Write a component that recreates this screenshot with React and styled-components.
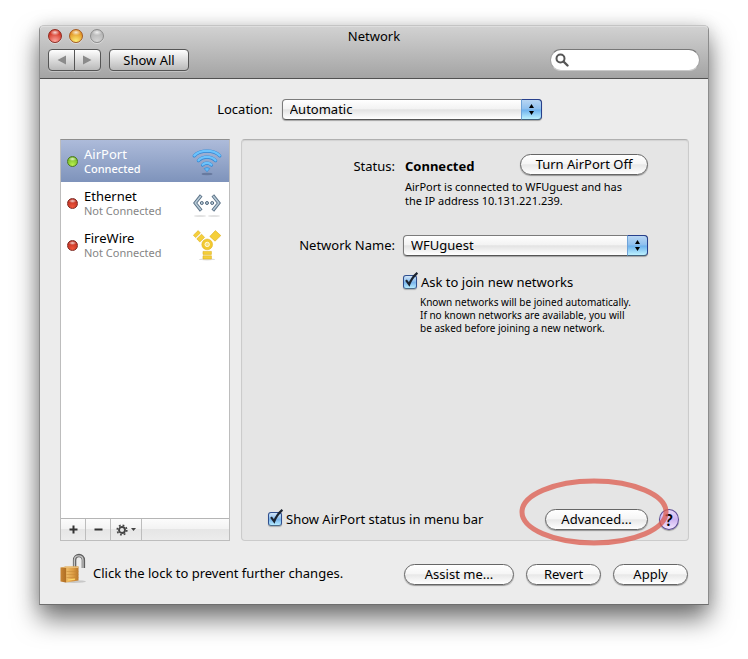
import React, { useState } from 'react';
import styled, { createGlobalStyle } from 'styled-components';

const GlobalStyle = createGlobalStyle`
  *,
  *::after {
    box-sizing: border-box;
  }

  body {
    margin: 0;
    background: #fff;
    color: #000;
    font-family: 'Lucida Grande', 'Noto Sans', 'Open Sans', sans-serif;
    font-size: 13px;
    line-height: 16px;
  }

  button,
  input,
  select {
    font: inherit;
    color: inherit;
    margin: 0;
  }
`;

const Page = styled.div`
  padding: 25px 39px 54px;
`;

const Window = styled.main`
  display: flex;
  flex-direction: column;
  background: #ececec;
  border: 1px solid #8c8c8c;
  border-top-color: #c4c4c4;
  border-bottom-color: #6e6e6e;
  border-radius: 5px 5px 0 0;
  box-shadow: 0 14px 26px rgba(0, 0, 0, 0.55), 0 0 16px rgba(0, 0, 0, 0.12);
`;

const Header = styled.header`
  background: linear-gradient(#d2d2d2, #a4a4a4);
  border-bottom: 1px solid #515151;
  border-radius: 4px 4px 0 0;
  box-shadow: inset 0 1px 0 #dedede;
  padding: 0 8px 7px;
`;

const TitleBar = styled.div`
  display: grid;
  grid-template-columns: 1fr auto 1fr;
  align-items: center;
  height: 20px;
  margin-bottom: 3px;
`;

const Title = styled.h1`
  margin: 0;
  font-size: 13px;
  font-weight: normal;
`;

const Lights = styled.div`
  display: flex;
  gap: 7px;
`;

const Light = styled.button`
  width: 14px;
  height: 14px;
  padding: 0;
  border: 1px solid ${({ $edge }) => $edge};
  border-radius: 50%;
  background: radial-gradient(ellipse 5px 3px at 50% 20%, rgba(255, 255, 255, 0.8), transparent),
    radial-gradient(circle at 50% 95%, ${({ $glow }) => $glow}, ${({ $fill }) => $fill} 75%);
  box-shadow: 0 1px 0 rgba(255, 255, 255, 0.4);
`;

const Toolbar = styled.div`
  display: flex;
  align-items: center;
  gap: 8px;
`;

const Segments = styled.div`
  display: flex;
`;

const ToolButton = styled.button`
  display: flex;
  align-items: center;
  justify-content: center;
  min-width: 80px;
  height: 22px;
  padding: 0 12px;
  border: 1px solid #555;
  border-radius: 4px;
  background: linear-gradient(#fefefe, #b9b9b9);
  box-shadow: 0 1px 0 rgba(255, 255, 255, 0.3);
`;

const SegmentButton = styled(ToolButton)`
  min-width: 27px;
  padding: 0;

  &:first-child {
    border-radius: 4px 0 0 4px;
  }

  &:last-child {
    margin-left: -1px;
    border-radius: 0 4px 4px 0;
  }
`;

const Search = styled.label`
  display: flex;
  align-items: center;
  gap: 4px;
  width: 150px;
  height: 22px;
  margin-left: auto;
  padding: 0 8px 0 4px;
  border: 1px solid #a2a2a2;
  border-top-color: #777;
  border-bottom-color: #c9c9c9;
  border-radius: 11px;
  background: #fff;

  input {
    flex: 1;
    min-width: 0;
    border: 0;
    padding: 0;
    outline: none;
    background: none;
  }
`;

const Content = styled.div`
  display: flex;
  flex-direction: column;
  padding: 20px 19px 19px 20px;
`;

const LocationRow = styled.div`
  display: flex;
  align-items: center;
  justify-content: center;
  gap: 9px;
  padding-left: 10px;
  margin-bottom: 19px;

  label {
    padding-bottom: 2px;
  }
`;

const PopUp = styled.span`
  position: relative;
  display: block;
  width: ${({ $width }) => $width || '100%'};

  &::after {
    content: '';
    position: absolute;
    top: 0;
    right: 0;
    width: 21px;
    height: 21px;
    border: 1px solid #28408c;
    border-left-color: #6fa3d8;
    border-bottom-color: #42617c;
    border-radius: 0 4px 4px 0;
    background: linear-gradient(#b8d6f3, #8dbfee 48%, #6cb0ec 52%, #bdf2ff);
    pointer-events: none;
  }

  select {
    display: block;
    appearance: none;
    width: 100%;
    height: 21px;
    padding: 0 28px 1px 7px;
    border: 1px solid #7b7b7b;
    border-bottom-color: #555;
    border-radius: 4px;
    background: linear-gradient(#fff, #f3f3f3 45%, #e3e3e3 52%, #fff);
    box-shadow: 0 1px 1px rgba(0, 0, 0, 0.3);
  }

  svg {
    position: absolute;
    z-index: 1;
    top: 4px;
    right: 7px;
    pointer-events: none;
  }
`;

const Columns = styled.div`
  display: flex;
  gap: 11px;
  min-height: 402px;
`;

const Sidebar = styled.nav`
  display: flex;
  flex-direction: column;
  flex: 0 0 170px;
  border: 1px solid #bdbdbd;
  border-top-color: #8e8e8e;
  background: #fff;
`;

const Service = styled.button`
  display: flex;
  align-items: center;
  gap: 6px;
  height: 42px;
  padding: 0 6px;
  border: 0;
  text-align: left;
  background: ${({ $selected }) => ($selected ? 'linear-gradient(#adbbda, #7e93bb)' : 'none')};
  color: ${({ $selected }) => ($selected ? '#fff' : '#000')};
`;

const Dot = styled.span`
  width: 11px;
  height: 11px;
  border-radius: 50%;
  border: 1px solid ${({ $on }) => ($on ? '#4c7a1c' : '#7f2a22')};
  background: radial-gradient(ellipse 4px 2px at 50% 22%, rgba(255, 255, 255, 0.8), transparent),
    radial-gradient(circle at 50% 85%, ${({ $on }) => ($on ? '#b8f04c, #62a81e' : '#f0563c, #b02318')});
`;

const ServiceText = styled.span`
  flex: 1;
  display: flex;
  flex-direction: column;
  line-height: 15px;

  small {
    font-size: 11px;
    line-height: 14px;
    font-weight: ${({ $selected }) => ($selected ? 500 : 400)};
    color: ${({ $selected }) => ($selected ? '#fff' : '#858585')};
  }
`;

const SidebarBar = styled.div`
  display: flex;
  height: 22px;
  margin-top: auto;
  border-top: 1px solid #b5b5b5;
  background: linear-gradient(#fcfcfc, #f3f3f3 46%, #e6e6e6 50%, #ececec);
`;

const BarButton = styled.button`
  display: flex;
  align-items: center;
  justify-content: center;
  gap: 3px;
  width: ${({ $wide }) => ($wide ? 31 : 25)}px;
  padding: 0;
  border: 0;
  border-right: 1px solid #bdbdbd;
  background: none;
`;

const Panel = styled.section`
  flex: 1;
  display: flex;
  flex-direction: column;
  padding: 14px 9px 10px 26px;
  border: 1px solid #cbcbcb;
  border-top-color: #b0b0b0;
  border-radius: 4px;
  background: #e5e5e5;
  box-shadow: inset 0 1px 1px rgba(0, 0, 0, 0.08);
`;

const Fields = styled.div`
  display: grid;
  grid-template-columns: 1fr 245px;
  column-gap: 8px;
  padding-right: 31px;
`;

const FieldLabel = styled.label`
  text-align: right;
  line-height: ${({ $tall }) => ($tall ? 24 : 20)}px;
`;

const Field = styled.div`
  display: flex;
  flex-direction: column;
`;

const JoinField = styled(Field)`
  grid-column: 2;
  padding-top: 18px;
`;

const StatusLine = styled.div`
  display: flex;
  align-items: center;
  justify-content: space-between;
  padding-left: 2px;

  strong {
    padding-top: 2px;
    font-weight: 700;
  }
`;

const StatusNote = styled.p`
  margin: 5px 0 27px 2px;
  font-size: 11px;
  line-height: 14px;
`;

const JoinNote = styled.p`
  margin: 4px 0 0 17px;
  font-size: 10px;
  line-height: 13px;
`;

const PillButton = styled.button`
  min-width: ${({ $width }) => $width || 75}px;
  height: 21px;
  padding: 0 12px 1px;
  border: 1px solid #666;
  border-radius: 11px;
  background: linear-gradient(#fff, #f6f6f6 45%, #e8e8e8 52%, #fff);
  box-shadow: 0 1px 1px rgba(0, 0, 0, 0.35);
  line-height: 18px;
  white-space: nowrap;
`;

const CheckLabel = styled.label`
  display: flex;
  align-items: center;
  gap: 4px;
  padding-bottom: 2px;
`;

const CheckBox = styled.span`
  position: relative;
  display: flex;

  input {
    appearance: none;
    width: 14px;
    height: 14px;
    border: 1px solid #2f4f8f;
    border-bottom-color: #4d6c8c;
    border-radius: 3px;
    background: linear-gradient(#d3e6f8, #7cb6ec 55%, #b5ebff);
    box-shadow: 0 1px 1px rgba(0, 0, 0, 0.25);
  }

  svg {
    position: absolute;
    left: 0;
    bottom: 2px;
    pointer-events: none;
  }

  input:not(:checked) + svg {
    display: none;
  }
`;

const PanelFooter = styled.div`
  display: flex;
  align-items: center;
  gap: 11px;
  margin-top: auto;
`;

const Highlighted = styled.div`
  position: relative;
  margin-left: auto;

  svg {
    position: absolute;
    left: -26px;
    top: -31px;
    z-index: 2;
    pointer-events: none;
  }
`;

const HelpButton = styled.button`
  width: 20px;
  height: 21px;
  padding: 0;
  border: 1px solid #5b4a94;
  border-radius: 50%;
  background: linear-gradient(#e6d8f8, #cdb4f0 50%, #f4e6ff);
  box-shadow: 0 1px 1px rgba(0, 0, 0, 0.35);
  font-size: 16px;
  font-weight: 600;
  line-height: 18px;
`;

const Footer = styled.footer`
  display: flex;
  align-items: center;
  gap: 12px;
  margin-top: 11px;
  padding-right: 1px;
`;

const LockLabel = styled.button`
  display: flex;
  align-items: center;
  gap: 6px;
  margin-right: auto;
  padding: 0;
  border: 0;
  background: none;
  height: 32px;

  span {
    padding-top: 9px;
  }
`;

const FooterButtons = styled.div`
  display: flex;
  gap: 12px;
  padding-top: 12px;
`;

const Arrows = () => (
  <svg width="7" height="13" viewBox="0 0 7 13" aria-hidden="true">
    <path d="M3.5 1 6 5H1zM3.5 12 1 8h5z" fill="#000" />
  </svg>
);

const CheckMark = () => (
  <svg width="16" height="15" viewBox="0 0 16 15" aria-hidden="true">
    <path d="M3 8.2 6.2 12.4C8 7.6 10.6 4 14.4 0.8" fill="none" stroke="#1c2430" strokeWidth="2.2" />
  </svg>
);

const Magnifier = () => (
  <svg width="14" height="14" viewBox="0 0 14 14" fill="none" stroke="#565656" aria-hidden="true">
    <circle cx="5.5" cy="5.5" r="4" strokeWidth="2" />
    <path d="m8.5 8.5 4 4" strokeWidth="2.4" strokeLinecap="round" />
  </svg>
);

const AirPortIcon = () => (
  <svg width="32" height="32" viewBox="0 0 32 32" fill="none" aria-hidden="true">
    <ellipse cx="16" cy="29" rx="5.5" ry="1.2" fill="#5b6c90" opacity="0.7" />
    <g stroke="#2f86d4" strokeWidth="3.2" strokeLinecap="round">
      <path d="M3.2 10.8C9.5 4.6 22.5 4.6 28.8 10.8" />
      <path d="M7.4 15.6C12 11 20 11 24.6 15.6" />
      <path d="M11.6 20C14 17.4 18 17.4 20.4 20" />
    </g>
    <g stroke="#6cc2fc" strokeWidth="2.2" strokeLinecap="round">
      <path d="M3.2 10.6C9.5 4.4 22.5 4.4 28.8 10.6" />
      <path d="M7.4 15.4C12 10.8 20 10.8 24.6 15.4" />
      <path d="M11.6 19.8C14 17.2 18 17.2 20.4 19.8" />
    </g>
    <path d="M13.2 23.6Q16 21.4 18.8 23.6L16 26.8z" fill="#62bcfa" stroke="#2f86d4" strokeWidth="0.6" />
  </svg>
);

const EthernetIcon = () => (
  <svg width="32" height="32" viewBox="0 0 32 32" fill="none" aria-hidden="true">
    <ellipse cx="9" cy="29" rx="6" ry="1" fill="#e2e2e2" />
    <ellipse cx="23" cy="29" rx="6" ry="1" fill="#e2e2e2" />
    <g stroke="#5d7388" strokeWidth="3.4">
      <path d="M10.2 8.4 4.2 16l6 7.6" />
      <path d="M21.8 8.4l6 7.6-6 7.6" />
    </g>
    <g stroke="#b9ccd8" strokeWidth="1.5">
      <path d="M9.8 9 4.2 16l5.6 7" />
      <path d="M22.2 9l5.6 7-5.6 7" />
    </g>
    <g fill="#b9ccd8" stroke="#54697e" strokeWidth="1">
      <circle cx="10.8" cy="16" r="1.5" />
      <circle cx="16" cy="16" r="1.5" />
      <circle cx="21.2" cy="16" r="1.5" />
    </g>
  </svg>
);

const FireWireIcon = () => (
  <svg width="32" height="32" viewBox="0 0 32 32" aria-hidden="true">
    <ellipse cx="16" cy="30.4" rx="8" ry="1" fill="#dedede" />
    <g fill="#f5cf3a" stroke="#dcae20" strokeWidth="0.6">
      <path d="M2.4 6.2 7.2 1.6l2.2 2.4-4.8 4.6z" />
      <path d="m5.8 9.8 4.8-4.6 3 3.2L8.8 13z" />
      <path d="M24.4 1.6 29.8 6.6 24 12.2l-5.2-4.8z" />
      <path d="M12 22.4h8.4v3H12zM12 26.8h8.4v3.2H12z" />
    </g>
    <circle cx="16.2" cy="15.4" r="5.4" fill="#f2c930" stroke="#dcae20" strokeWidth="0.5" />
    <circle cx="16.2" cy="15.4" r="2.2" fill="#f8e07a" stroke="#fffbe6" strokeWidth="1" />
  </svg>
);

const GearIcon = () => (
  <svg width="12" height="12" viewBox="0 0 12 12" fill="none" stroke="#444" aria-hidden="true">
    <circle cx="6" cy="6" r="3" strokeWidth="1.9" />
    <circle cx="6" cy="6" r="4.8" strokeWidth="1.6" strokeDasharray="1.8 1.97" />
  </svg>
);

const LockIcon = () => (
  <svg width="27" height="32" viewBox="0 0 27 32" aria-hidden="true">
    <defs>
      <linearGradient id="brass" x1="0" x2="1" y1="0" y2="0">
        <stop offset="0" stopColor="#c98636" />
        <stop offset="0.3" stopColor="#b06f24" />
        <stop offset="0.34" stopColor="#eebb66" />
        <stop offset="0.7" stopColor="#dc9c44" />
        <stop offset="1" stopColor="#b8762a" />
      </linearGradient>
    </defs>
    <ellipse cx="14" cy="28.6" rx="12" ry="1.4" fill="#c8c8c8" />
    <path d="M14.6 15V7.2c0-6.2 8.8-6.2 8.8 0V15" fill="none" stroke="#5e5e5e" strokeWidth="3.4" />
    <path d="M14.4 15V7.2c0-5.8 8.6-5.8 8.6 0V15" fill="none" stroke="#c4c4c4" strokeWidth="1.4" />
    <path d="m0.5 14.4 6-1h12v14.2L6 29.4l-5.5-1z" fill="url(#brass)" />
    <path d="m0.5 14.4 6-1h12l-0.4 1.6H6z" fill="#e9bd76" />
    <path d="M6.5 18.5h12M6.5 21.5h12M6.5 24.5h12" stroke="#c48634" strokeWidth="0.5" />
    <path d="m8 27 7-0.8" stroke="#ffd96a" strokeWidth="1.2" />
  </svg>
);

const services = [
  { name: 'AirPort', status: 'Connected', on: true, Icon: AirPortIcon },
  { name: 'Ethernet', status: 'Not Connected', on: false, Icon: EthernetIcon },
  { name: 'FireWire', status: 'Not Connected', on: false, Icon: FireWireIcon },
];

const Check = ({ children }) => (
  <CheckLabel>
    <CheckBox>
      <input type="checkbox" defaultChecked />
      <CheckMark />
    </CheckBox>
    {children}
  </CheckLabel>
);

const App = () => {
  const [selected, setSelected] = useState('AirPort');

  return (
    <>
      <GlobalStyle />
      <Page>
        <Window>
          <Header>
            <TitleBar>
              <Lights>
                <Light aria-label="Close" $edge="#8e2a20" $fill="#d0301f" $glow="#ffa8a0" />
                <Light aria-label="Minimize" $edge="#a55a20" $fill="#e09020" $glow="#fff27a" />
                <Light aria-label="Zoom" $edge="#8d8d8d" $fill="#b4b4b4" $glow="#d6d6d6" />
              </Lights>
              <Title>Network</Title>
            </TitleBar>
            <Toolbar>
              <Segments>
                <SegmentButton aria-label="Back">
                  <svg width="9" height="10" viewBox="0 0 9 10"><path d="M9 0.5v9L0.5 5z" fill="#8b8b8b" /></svg>
                </SegmentButton>
                <SegmentButton aria-label="Forward">
                  <svg width="9" height="10" viewBox="0 0 9 10"><path d="M0 0.5v9L8.5 5z" fill="#8b8b8b" /></svg>
                </SegmentButton>
              </Segments>
              <ToolButton>Show All</ToolButton>
              <Search>
                <Magnifier />
                <input type="text" aria-label="Search" />
              </Search>
            </Toolbar>
          </Header>

          <Content>
            <LocationRow>
              <label htmlFor="location">Location:</label>
              <PopUp $width="260px">
                <select id="location">
                  <option>Automatic</option>
                </select>
                <Arrows />
              </PopUp>
            </LocationRow>

            <Columns>
              <Sidebar>
                {services.map(({ name, status, on, Icon }) => (
                  <Service key={name} $selected={selected === name} onClick={() => setSelected(name)}>
                    <Dot $on={on} />
                    <ServiceText $selected={selected === name}>
                      {name}
                      <small>{status}</small>
                    </ServiceText>
                    <Icon />
                  </Service>
                ))}
                <SidebarBar>
                  <BarButton aria-label="Add">
                    <svg width="9" height="9" viewBox="0 0 9 9"><path d="M4.5 0.5v8M0.5 4.5h8" stroke="#333" strokeWidth="2" /></svg>
                  </BarButton>
                  <BarButton aria-label="Remove">
                    <svg width="9" height="9" viewBox="0 0 9 9"><path d="M0.5 4.5h8" stroke="#333" strokeWidth="2" /></svg>
                  </BarButton>
                  <BarButton aria-label="Actions" $wide>
                    <GearIcon />
                    <svg width="5" height="3" viewBox="0 0 5 3"><path d="M0 0h5L2.5 3z" fill="#444" /></svg>
                  </BarButton>
                </SidebarBar>
              </Sidebar>

              <Panel>
                <Fields>
                  <FieldLabel as="span" $tall>Status:</FieldLabel>
                  <Field>
                    <StatusLine>
                      <strong>Connected</strong>
                      <PillButton $width={128}>Turn AirPort Off</PillButton>
                    </StatusLine>
                    <StatusNote>
                      AirPort is connected to WFUguest and has
                      <br />
                      the IP address 10.131.221.239.
                    </StatusNote>
                  </Field>
                  <FieldLabel htmlFor="network">Network Name:</FieldLabel>
                  <Field>
                    <PopUp>
                      <select id="network">
                        <option>WFUguest</option>
                      </select>
                      <Arrows />
                    </PopUp>
                  </Field>
                  <JoinField>
                    <Check>Ask to join new networks</Check>
                    <JoinNote>
                      Known networks will be joined automatically.
                      <br />
                      If no known networks are available, you will
                      <br />
                      be asked before joining a new network.
                    </JoinNote>
                  </JoinField>
                </Fields>

                <PanelFooter>
                  <Check>Show AirPort status in menu bar</Check>
                  <Highlighted>
                    <PillButton $width={103}>Advanced...</PillButton>
                    <svg width="150" height="68" viewBox="0 0 150 68" aria-hidden="true">
                      <ellipse cx="75" cy="34" rx="72" ry="31" fill="none" stroke="#dc5a4c" strokeOpacity="0.75" strokeWidth="5" />
                    </svg>
                  </Highlighted>
                  <HelpButton aria-label="Help">?</HelpButton>
                </PanelFooter>
              </Panel>
            </Columns>

            <Footer>
              <LockLabel>
                <LockIcon />
                <span>Click the lock to prevent further changes.</span>
              </LockLabel>
              <FooterButtons>
                <PillButton $width={110}>Assist me...</PillButton>
                <PillButton>Revert</PillButton>
                <PillButton>Apply</PillButton>
              </FooterButtons>
            </Footer>
          </Content>
        </Window>
      </Page>
    </>
  );
};

export default App;
